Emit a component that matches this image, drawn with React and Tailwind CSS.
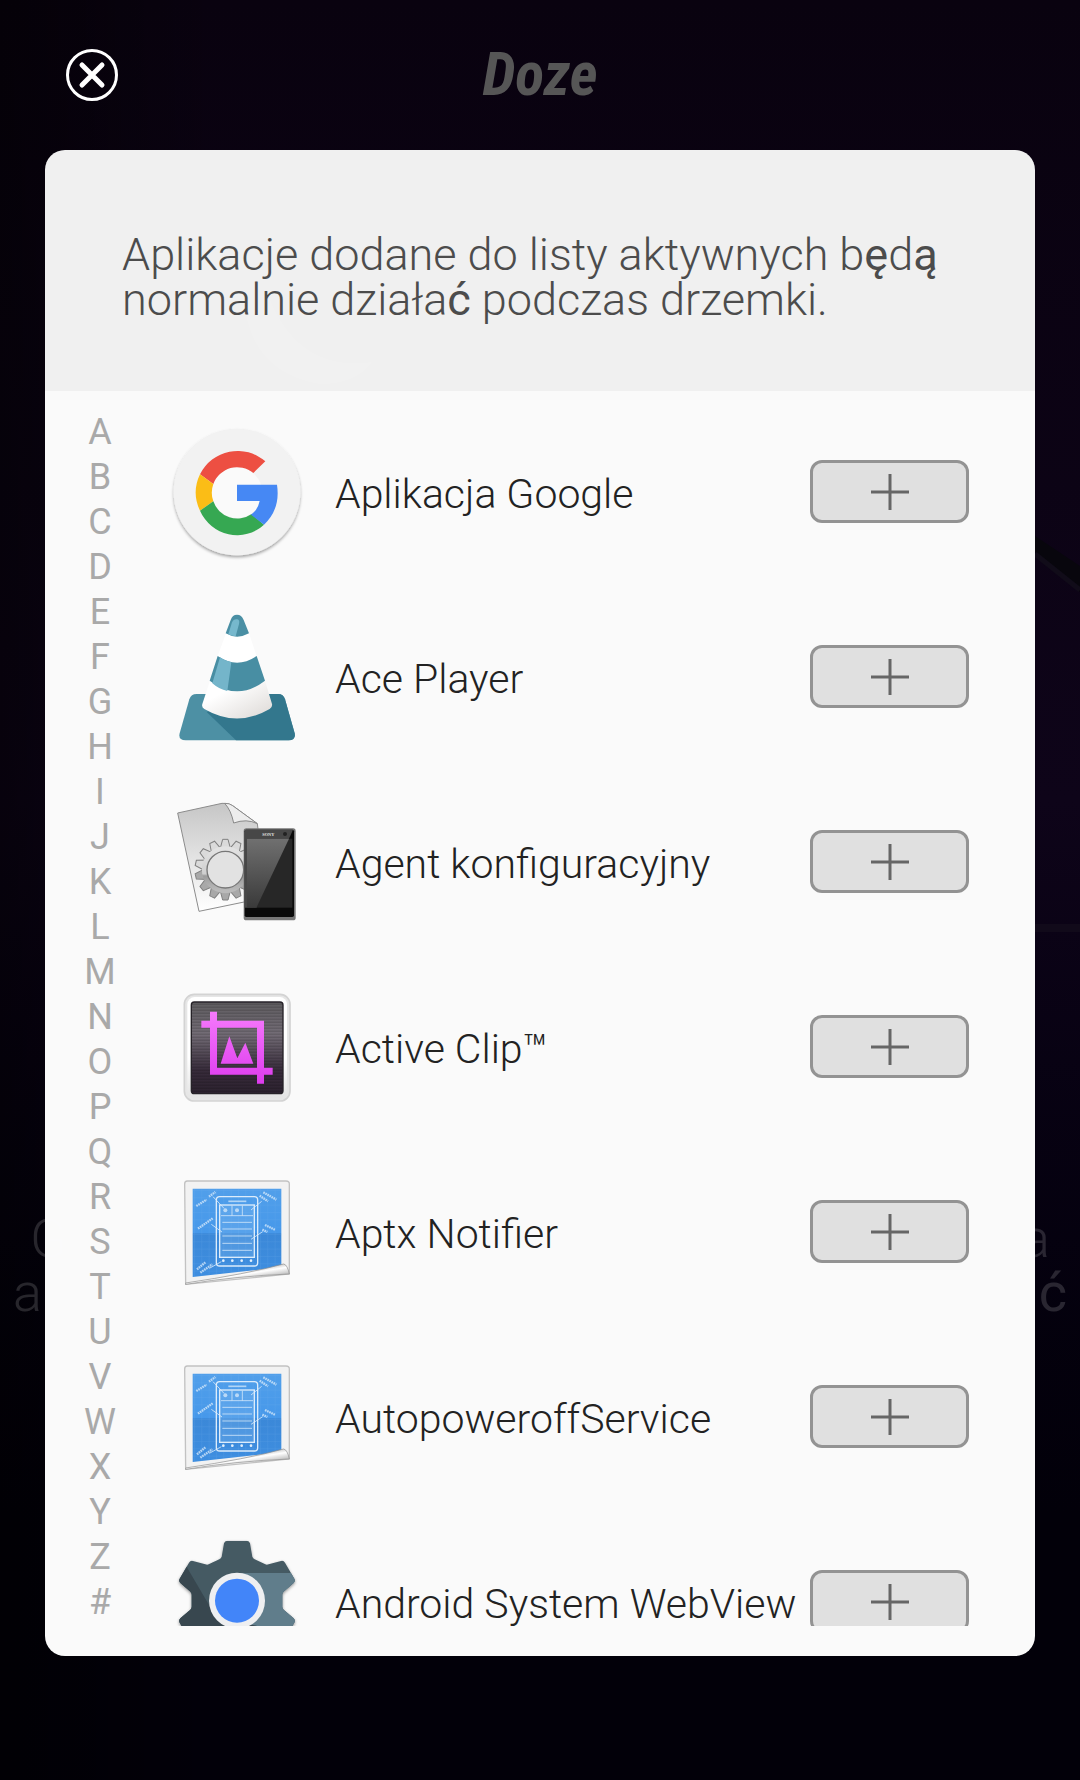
import React, { useState } from 'react';

const LETTERS = 'ABCDEFGHIJKLMNOPQRSTUVWXYZ#'.split('');

// Angles of the cog teeth on the configuration agent icon
const COG_TEETH = Array.from({ length: 14 }, (_, i) => (i * 360) / 14);

function GoogleIcon() {
    return (
        <svg viewBox="69 82 384 384" className="size-32 shrink-0 overflow-visible" aria-hidden="true">
            <defs>
                <filter id="googleShadow" x="-10%" y="-10%" width="120%" height="125%">
                    <feDropShadow dx="0" dy="6" stdDeviation="4" floodColor="#000" floodOpacity="0.35" />
                </filter>
            </defs>
            <circle cx="261" cy="274" r="190" fill="#f2f2f2" filter="url(#googleShadow)" />
            <circle cx="261" cy="276" r="76" fill="#fafafa" />
            <path d="M150 221A126 126 0 0 1 346 182L310 217A76 76 0 0 0 190 250Z" fill="#ed4f42" />
            <path d="M150 221L190 250A76 76 0 0 0 190 302L150 330A126 126 0 0 1 150 221Z" fill="#fbbd16" />
            <path d="M150 330L190 302A76 76 0 0 0 305 340L342 372A122 126 0 0 1 150 330Z" fill="#36a852" />
            <path d="M261 252H381Q392 325 342 372L303 342Q323 329 329 301H261Z" fill="#4688f4" />
        </svg>
    );
}

function ConeIcon() {
    return (
        <svg viewBox="69 67 384 384" className="size-32 shrink-0 overflow-visible" aria-hidden="true">
            <defs>
                <linearGradient id="coneWhite" x1="0" y1="0" x2="1" y2="1">
                    <stop offset="0.3" stopColor="#ffffff" />
                    <stop offset="1" stopColor="#dcd8d5" />
                </linearGradient>
            </defs>
            <path d="M140 310H384Q400 310 405 326L434 428Q438 449 416 449H107Q84 449 89 428L118 326Q123 310 140 310Z" fill="#4d90a4" />
            <path d="M170 364L258 449H416Q438 449 434 428L405 326Q400 310 384 310H300Z" fill="#33778d" />
            <path d="M228 128L203 196Q261 236 320 196L297 128Q261 148 228 128Z" fill="#ffffff" />
            <path d="M180 270L157 340Q154 349 163 355Q261 412 359 355Q368 349 366 340L345 270Q261 334 180 270Z" fill="url(#coneWhite)" />
            <path d="M242 88Q247 72 261 72Q275 72 281 88L297 128Q261 148 227 128Z" fill="#4a8fa4" />
            <path d="M246 95Q251 84 262 86Q270 88 267 100L257 137Q243 136 235 131Z" fill="#76b8cd" />
            <path d="M203 196Q261 236 320 196L345 270Q261 334 179 270Z" fill="#488ea3" />
            <path d="M210 200Q225 211 244 215L232 301Q207 296 187 278Z" fill="#74b5ca" />
        </svg>
    );
}

function AgentIcon() {
    return (
        <svg viewBox="69 52 384 384" className="size-32 shrink-0 overflow-visible" aria-hidden="true">
            <defs>
                <linearGradient id="agentPage" x1="0" y1="0" x2="0" y2="1">
                    <stop offset="0" stopColor="#c6c6c6" />
                    <stop offset="1" stopColor="#ffffff" />
                </linearGradient>
                <linearGradient id="agentCog" x1="0" y1="0" x2="0" y2="1">
                    <stop offset="0" stopColor="#e2e2e2" />
                    <stop offset="0.6" stopColor="#cfcfcf" />
                    <stop offset="0.65" stopColor="#9b9b9b" />
                    <stop offset="1" stopColor="#bababa" />
                </linearGradient>
                <linearGradient id="agentGlare" x1="0" y1="0" x2="0" y2="1">
                    <stop offset="0" stopColor="#707070" />
                    <stop offset="1" stopColor="#3a3a3a" />
                </linearGradient>
            </defs>
            <path d="M83 97L216 68Q234 66 248 75L322 129L350 350L147 392Z" fill="url(#agentPage)" stroke="#8c8c8c" strokeWidth="3" />
            <path d="M224 68Q243 88 251 127Q290 113 322 129L248 75Q238 67 224 68Z" fill="#ededed" stroke="#8a8a8a" strokeWidth="3" />
            <g stroke="#808080" strokeWidth="3">
                {COG_TEETH.map((angle) => (
                    <path
                        key={angle}
                        d="M209 210L218 176H234L243 210Z"
                        fill={angle > 90 && angle < 270 ? '#a8a8a8' : '#dadada'}
                        transform={`rotate(${angle} 226 267)`}
                    />
                ))}
            </g>
            <circle cx="226" cy="267" r="62" fill="none" stroke="url(#agentCog)" strokeWidth="17" />
            <circle cx="226" cy="267" r="55" fill="#e2e2e2" stroke="#777" strokeWidth="4" />
            <rect x="281" y="143" width="156" height="276" rx="8" fill="#777" />
            <rect x="284" y="147" width="148" height="262" rx="5" fill="#0a0a0a" />
            <path d="M284 147H429L417 174L320 381H284Z" fill="#474747" />
            <rect x="291" y="174" width="136" height="207" fill="#272727" />
            <path d="M291 174H417L319 381H291Z" fill="url(#agentGlare)" />
            <text x="337" y="165" fontSize="13" fontWeight="700" fill="#e5e5e5" className="font-['Liberation_Serif',serif]">SONY</text>
            <circle cx="405" cy="160" r="6" fill="#222" />
        </svg>
    );
}

function ClipIcon() {
    return (
        <svg viewBox="69 37 384 384" className="size-32 shrink-0 overflow-visible" aria-hidden="true">
            <defs>
                <linearGradient id="clipBack" x1="0" y1="0" x2="0" y2="1">
                    <stop offset="0" stopColor="#5f5d60" />
                    <stop offset="0.35" stopColor="#736c76" />
                    <stop offset="0.75" stopColor="#372b3a" />
                    <stop offset="1" stopColor="#2c222f" />
                </linearGradient>
                <linearGradient id="clipFrame" x1="0" y1="0" x2="0" y2="1">
                    <stop offset="0" stopColor="#ffffff" />
                    <stop offset="0.6" stopColor="#ffffff" />
                    <stop offset="1" stopColor="#e4e4e4" />
                </linearGradient>
                <linearGradient id="clipPink" gradientUnits="userSpaceOnUse" x1="0" y1="120" x2="0" y2="340">
                    <stop offset="0" stopColor="#f67bfd" />
                    <stop offset="1" stopColor="#dd3bed" />
                </linearGradient>
                <pattern id="clipLines" width="10" height="9" patternUnits="userSpaceOnUse">
                    <rect width="10" height="3" fill="#000" opacity="0.2" />
                </pattern>
            </defs>
            <rect x="103" y="71" width="317" height="320" rx="30" fill="#e6e6e6" stroke="#d3d3d3" strokeWidth="5" />
            <rect x="112" y="79" width="299" height="302" rx="22" fill="url(#clipFrame)" />
            <rect x="124" y="94" width="275" height="275" rx="9" fill="url(#clipBack)" stroke="#262228" strokeWidth="4" />
            <rect x="126" y="96" width="271" height="271" rx="7" fill="url(#clipLines)" />
            <path d="M180 123H201V150H342V291H368V312H342V339H321V312H180V171H154V150H180ZM201 171V291H321V171Z" fill="url(#clipPink)" fillRule="evenodd" />
            <path d="M212 279L238 197L262 263L286 216L310 279Z" fill="url(#clipPink)" />
        </svg>
    );
}

function BlueprintIcon() {
    return (
        <svg viewBox="69 22 384 384" className="size-32 shrink-0 overflow-visible" aria-hidden="true">
            <defs>
                <linearGradient id="blueprintSheet" x1="0" y1="0" x2="0" y2="1">
                    <stop offset="0" stopColor="#519fea" />
                    <stop offset="0.5" stopColor="#4698ea" />
                    <stop offset="0.51" stopColor="#3b88d8" />
                    <stop offset="1" stopColor="#3e8ee0" />
                </linearGradient>
                <linearGradient id="blueprintCurl" gradientUnits="userSpaceOnUse" x1="300" y1="325" x2="305" y2="356">
                    <stop offset="0" stopColor="#c9c9c9" />
                    <stop offset="0.4" stopColor="#ffffff" />
                    <stop offset="1" stopColor="#c4c4c4" />
                </linearGradient>
                <pattern id="blueprintGrid" width="22" height="22" patternUnits="userSpaceOnUse">
                    <path d="M0 1H22M1 0V22" stroke="#79b6f2" strokeWidth="1" opacity="0.4" />
                </pattern>
            </defs>
            <path d="M112 61H408Q418 61 418 70V340L107 371L104 70Q104 61 112 61Z" fill="#f2f2f2" stroke="#c2c2c2" strokeWidth="4" />
            <path d="M128 84H394V320L128 349Z" fill="url(#blueprintSheet)" />
            <path d="M128 84H394V320L128 349Z" fill="url(#blueprintGrid)" />
            <rect x="209" y="133" width="104" height="157" fill="#82b9f0" opacity="0.3" />
            <g fill="none" stroke="#dcecfb">
                <rect x="199" y="108" width="124" height="208" rx="10" strokeWidth="4" />
                <rect x="209" y="133" width="104" height="157" strokeWidth="4" />
                <path d="M235 122H289" strokeWidth="5" opacity="0.7" />
                <path d="M213 165H309M246 135V165M277 135V165M217 185H306M217 205H306M217 226H306M217 248H306M217 269H306" strokeWidth="3" opacity="0.75" />
                <path d="M189 108L222 143M335 122L303 148M184 191L216 214M338 213L303 236M178 323L214 303" strokeWidth="3" opacity="0.8" />
                <path d="M139 136L170 117M177 108L196 94M340 95L379 117M329 105L354 122M144 204L188 173M345 193L376 208M337 207L352 214M141 326L166 305M151 336L187 311" strokeWidth="7" strokeDasharray="5 2" opacity="0.75" />
            </g>
            <g fill="#e3f0fc">
                <circle cx="220" cy="300" r="4" />
                <circle cx="247" cy="300" r="4" />
                <circle cx="275" cy="300" r="4" />
                <circle cx="303" cy="300" r="4" />
                <circle cx="261" cy="149" r="6" opacity="0.7" />
                <circle cx="226" cy="149" r="6" opacity="0.7" />
            </g>
            <path d="M107 367Q290 340 401 310Q412 312 418 340Q260 346 107 371Z" fill="url(#blueprintCurl)" stroke="#8d8d8d" strokeWidth="2" />
        </svg>
    );
}

function WebViewIcon() {
    return (
        <svg viewBox="69 82 384 384" className="size-32 shrink-0 overflow-visible" aria-hidden="true">
            <defs>
                <clipPath id="webviewGear">
                    <path d="M232 90H290Q298 90 300 98L307 138Q309 143 314 146L346 161Q350 163 356 161L393 151Q401 149 405 156L433 204Q437 211 431 217L401 243Q397 247 397 252V288Q397 293 401 297L431 323Q437 329 433 336L405 384Q401 391 393 389L350 378L309 399L300 442Q298 450 290 450H232Q224 450 222 442L213 399L172 378L129 389Q121 391 117 384L89 336Q85 329 91 323L121 297Q125 293 125 288V252Q125 247 121 243L91 217Q85 211 89 204L117 156Q121 149 129 151L166 161Q172 163 176 161L208 146Q213 143 215 138L222 98Q224 90 232 90Z" />
                </clipPath>
                <filter id="webviewShadow" x="-10%" y="-10%" width="120%" height="125%">
                    <feDropShadow dx="0" dy="4" stdDeviation="5" floodColor="#000" floodOpacity="0.4" />
                </filter>
            </defs>
            <g filter="url(#webviewShadow)">
                <g clipPath="url(#webviewGear)">
                    <rect x="80" y="80" width="362" height="380" fill="#455a64" />
                    <path d="M261 187H442V460H261Z" fill="#607d8b" />
                    <path d="M108 165L200 322L320 345L290 460H80V165Z" fill="#37474f" />
                </g>
            </g>
            <circle cx="261" cy="270" r="84" fill="#eeeff1" />
            <circle cx="261" cy="270" r="66" fill="#4285f9" />
        </svg>
    );
}

const APPS = [
    { name: 'Aplikacja Google', Icon: GoogleIcon },
    { name: 'Ace Player', Icon: ConeIcon },
    { name: 'Agent konfiguracyjny', Icon: AgentIcon },
    { name: 'Active Clip™', Icon: ClipIcon },
    { name: 'Aptx Notifier', Icon: BlueprintIcon },
    { name: 'AutopoweroffService', Icon: BlueprintIcon },
    { name: 'Android System WebView', Icon: WebViewIcon },
];

// Night landscape and the dimmed screen that stays behind the dialog
function Backdrop() {
    return (
        <div className="absolute inset-0 -z-10 overflow-hidden bg-linear-to-b from-[#09020f] via-[#0e0419] via-45% to-[#020009] to-85%" aria-hidden="true">
            <div className="absolute inset-0 bg-linear-to-r from-black/50 via-transparent via-20% to-transparent" />
            <svg viewBox="0 0 1080 1780" preserveAspectRatio="none" className="absolute inset-0 size-full">
                <path d="M1035 536L1080 566V592L1035 552Z" fill="#08060d" />
                <path d="M1035 554L1080 590" stroke="#110c19" strokeWidth="5" />
                <path d="M1035 928H1080" stroke="#110a1a" strokeWidth="8" />
                <path d="M244 300Q250 372 320 384Q356 384 372 362Q300 372 270 300Z" fill="#4b483a" />
            </svg>
            {/* Only the ends of the two lines stick out past the dialog */}
            <div className="absolute inset-x-0 top-[1212px] text-[54px] leading-[54px] font-light text-white/15">
                <p className="flex justify-between px-[30px]">
                    <span>G</span>
                    <span>a</span>
                </p>
                <p className="flex justify-between px-[13px]">
                    <span>a</span>
                    <span className="font-normal">ć</span>
                </p>
            </div>
        </div>
    );
}

function AppRow({ name, Icon, added, onToggle }) {
    return (
        <li className="flex h-[185px] items-center">
            <Icon />
            <span className="ml-[34px] min-w-0 flex-1 basis-0 pt-1 text-[41px] leading-12 font-light whitespace-nowrap text-[#222]">
                {name}
            </span>
            <button
                type="button"
                aria-label={`Dodaj ${name}`}
                aria-pressed={added}
                onClick={onToggle}
                className="flex h-[63px] w-[159px] shrink-0 items-center justify-center rounded-xl border-3 border-[#939393] bg-[#e0e0e0]"
            >
                <svg viewBox="0 0 38 38" className="size-[38px]" stroke="#666" strokeWidth="3" aria-hidden="true">
                    <path d="M0 19H38M19 1V37" />
                </svg>
            </button>
        </li>
    );
}

function App() {
    // Names of the apps that were put on the active list
    const [active, setActive] = useState([]);

    const toggle = (name) => {
        setActive(active.includes(name) ? active.filter((n) => n !== name) : [...active, name]);
    };

    return (
        <div className="relative isolate flex min-h-screen flex-col overflow-hidden font-['Roboto',sans-serif]">
            <Backdrop />

            <header className="grid h-[150px] grid-cols-[1fr_auto_1fr] items-center px-[66px]">
                <button type="button" aria-label="Zamknij" className="size-[52px]">
                    <svg viewBox="0 0 52 52" className="size-full" fill="none" stroke="#fff" aria-hidden="true">
                        <circle cx="26" cy="26" r="24.5" strokeWidth="3" />
                        <path d="M16 16L36 36M36 16L16 36" strokeWidth="5" strokeLinecap="round" />
                    </svg>
                </button>
                <h1 className="font-['Roboto_Condensed','Roboto',sans-serif] text-6xl leading-none font-bold text-[#565656] italic">
                    Doze
                </h1>
            </header>

            <main className="mx-[45px] mb-[124px] overflow-hidden rounded-[20px] bg-white/98">
                <p className="bg-black/4 px-[77px] pt-[82px] pb-[69px] text-[45px] leading-[45px] font-light text-[#4c4c4c]">
                    Aplikacje dodane do listy aktywnych b<span className="font-normal">ę</span>d<span className="font-normal">ą</span>{' '}
                    normalnie działa<span className="font-normal">ć</span> podczas drzemki.
                </p>

                <div className="flex items-start pb-[30px]">
                    <nav aria-label="Indeks" className="flex w-[110px] shrink-0 flex-col items-center pt-[19px]">
                        {LETTERS.map((letter) => (
                            <a key={letter} href={`#${letter}`} className="text-4xl leading-[45px] text-[#a9a9a9]">
                                {letter}
                            </a>
                        ))}
                    </nav>

                    {/* The last row is cut off by the scroll area */}
                    <ul className="max-h-[1235px] min-w-0 flex-1 overflow-hidden pt-2 pr-[66px] pl-[18px]">
                        {APPS.map((app) => (
                            <AppRow
                                key={app.name}
                                name={app.name}
                                Icon={app.Icon}
                                added={active.includes(app.name)}
                                onToggle={() => toggle(app.name)}
                            />
                        ))}
                    </ul>
                </div>
            </main>
        </div>
    );
}

export default App;
